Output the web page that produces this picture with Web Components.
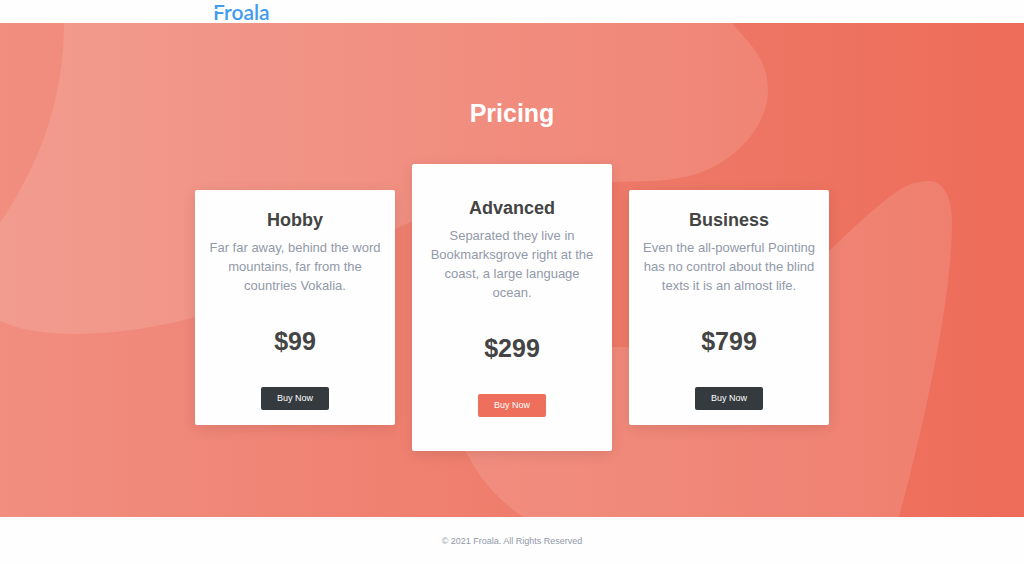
<!DOCTYPE html>
<html lang="en">
<head>
<meta charset="utf-8">
<meta name="viewport" content="width=device-width, initial-scale=1">
<title>Froala - Pricing</title>
<style>
  body {
    margin: 0;
    min-height: 100vh;
    display: flex;
    flex-direction: column;
    background: #fefefe;
    color: #444444;
    font-family: "Liberation Sans", Arial, sans-serif;
    --accent: #ee6f5b;
    --dark: #343a3e;
    --muted: #9299a9;
  }
</style>
</head>
<body>
  <site-header></site-header>
  <pricing-section heading="Pricing">
    <price-card name="Hobby" price="$99">Far far away, behind the word mountains, far from the countries Vokalia.</price-card>
    <price-card name="Advanced" price="$299" featured>Separated they live in Bookmarksgrove right at the coast, a large language ocean.</price-card>
    <price-card name="Business" price="$799">Even the all-powerful Pointing has no control about the blind texts it is an almost life.</price-card>
  </pricing-section>
  <site-footer>© 2021 Froala. All Rights Reserved</site-footer>

<script>
const headerTemplate = document.createElement('template');
headerTemplate.innerHTML = `
  <style>
    :host {
      display: block;
    }
    nav {
      display: flex;
      max-width: 598px;
      height: 23px;
      margin: 0 auto;
    }
    .logo {
      position: relative;
      font-family: Lato, sans-serif;
      font-size: 21px;
      font-weight: 600;
      line-height: 24px;
      color: #419bf0;
      text-decoration: none;
    }
    /* The break in the stem of the F */
    .logo::before {
      content: "";
      position: absolute;
      left: 0;
      top: 9px;
      width: 5px;
      height: 2px;
      background: #fefefe;
    }
  </style>
  <nav>
    <a class="logo" href="#">Froala</a>
  </nav>
`;

class SiteHeader extends HTMLElement {
  constructor() {
    super();
    this.attachShadow({ mode: 'open' });
    this.shadowRoot.appendChild(headerTemplate.content.cloneNode(true));
  }
}


const sectionTemplate = document.createElement('template');
sectionTemplate.innerHTML = `
  <style>
    :host {
      display: block;
      position: relative;
      padding: 75px 16px 66px;
      background: linear-gradient(90deg, #f18e80, #ed6c59);
    }
    .shapes {
      position: absolute;
      inset: 0;
      width: 100%;
      height: 100%;
    }
    .content {
      position: relative;
      max-width: 634px;
      margin: 0 auto;
    }
    h1 {
      margin: 0 0 36px;
      font-size: 25px;
      line-height: 30px;
      text-align: center;
      color: #ffffff;
    }
    .cards {
      display: grid;
      grid-template-columns: repeat(3, 1fr);
      gap: 17px;
      align-items: center;
    }
    @media (max-width: 600px) {
      .cards {
        grid-template-columns: 1fr;
      }
    }
  </style>
  <svg class="shapes" viewBox="0 23 1024 494" preserveAspectRatio="none" aria-hidden="true">
    <g fill="#ffffff" fill-opacity=".12">
      <path d="M64 23H732C742 35 750 43 757 53C764 64 768 76 768 90C768 125 735 166 685 177C662 182 640 181 612 182C520 182 465 197 395 229C325 261 260 298 195 317C155 328 112 334 73 334C43 334 18 329 0 321V223C40 164 64 98 64 23Z"/>
      <path d="M523 517C491 495 476 472 464 448C440 390 500 347 580 347H629C700 347 762 315 830 250C862 220 878 204 902 188C912 183 920 181 929 181C944 181 952 198 952 222C952 243 950 263 948 282C941 342 922 433 899 517Z"/>
    </g>
  </svg>
  <div class="content">
    <h1></h1>
    <div class="cards"><slot></slot></div>
  </div>
`;

class PricingSection extends HTMLElement {
  constructor() {
    super();
    this.attachShadow({ mode: 'open' });
    this.shadowRoot.appendChild(sectionTemplate.content.cloneNode(true));
  }

  connectedCallback() {
    this.shadowRoot.querySelector('h1').textContent = this.getAttribute('heading') || '';
  }
}


const cardTemplate = document.createElement('template');
cardTemplate.innerHTML = `
  <style>
    :host {
      display: block;
      padding: 20px 12px 15px;
      border-radius: 2px;
      background: #fefefe;
      box-shadow: 0 3px 14px rgba(0, 0, 0, .1);
      text-align: center;
    }
    :host([featured]) {
      padding-top: 34px;
      padding-bottom: 34px;
    }
    h2 {
      margin: 0 0 8px;
      font-size: 18px;
      line-height: 20px;
    }
    p {
      margin: 0;
    }
    .text {
      font-size: 13px;
      line-height: 19px;
      color: var(--muted);
    }
    .price {
      margin: 31px 0;
      font-size: 25px;
      font-weight: 700;
      line-height: 30px;
    }
    button {
      display: block;
      margin: 0 auto;
      padding: 0 16px;
      border: none;
      border-radius: 2px;
      background: var(--dark);
      color: #ffffff;
      font-family: inherit;
      font-size: 9px;
      line-height: 23px;
      cursor: pointer;
    }
    :host([featured]) button {
      background: var(--accent);
    }
    button:hover {
      opacity: .9;
    }
  </style>
  <h2></h2>
  <p class="text"><slot></slot></p>
  <p class="price"></p>
  <button type="button">Buy Now</button>
`;

class PriceCard extends HTMLElement {
  constructor() {
    super();
    this.attachShadow({ mode: 'open' });
    this.shadowRoot.appendChild(cardTemplate.content.cloneNode(true));
  }

  connectedCallback() {
    this.shadowRoot.querySelector('h2').textContent = this.getAttribute('name') || '';
    this.shadowRoot.querySelector('.price').textContent = this.getAttribute('price') || '';
  }
}


const footerTemplate = document.createElement('template');
footerTemplate.innerHTML = `
  <style>
    :host {
      display: block;
    }
    footer {
      padding: 18px 16px 17px;
      font-size: 9px;
      line-height: 12px;
      text-align: center;
      color: var(--muted);
    }
  </style>
  <footer><slot></slot></footer>
`;

class SiteFooter extends HTMLElement {
  constructor() {
    super();
    this.attachShadow({ mode: 'open' });
    this.shadowRoot.appendChild(footerTemplate.content.cloneNode(true));
  }
}

// Define all custom elements
customElements.define('site-header', SiteHeader);
customElements.define('pricing-section', PricingSection);
customElements.define('price-card', PriceCard);
customElements.define('site-footer', SiteFooter);
</script>
</body>
</html>
